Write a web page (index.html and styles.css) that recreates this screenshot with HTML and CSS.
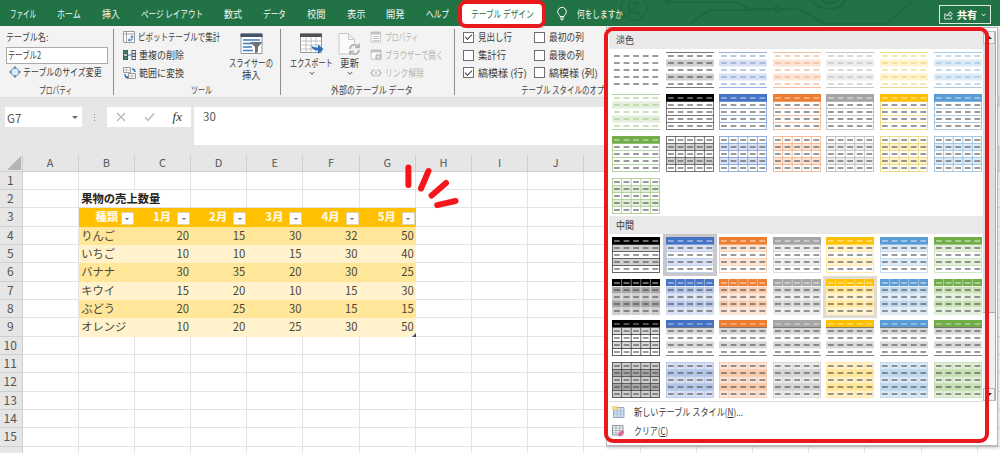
FILE: index.html
```html
<!DOCTYPE html>
<html lang="ja">
<head>
<meta charset="utf-8">
<title>果物の売上数量</title>
<link rel="stylesheet" href="styles.css">
</head>
<body>
<div class="app">
  <header class="tabbar">
    <svg class="circuit" width="400" height="26" viewBox="0 0 400 26" fill="none" stroke="#1d683e" stroke-width="1.6">
      <circle cx="34" cy="7" r="13"/><path d="M28 13 40 2M29 3v10h11M29 3h8"/>
      <circle cx="68" cy="2" r="2"/><path d="M70 2h65l16 7h26M90 24l19-14h60M180 9h18l28 15h60l28-24"/><circle cx="177" cy="9" r="2.5"/>
      <path d="M212 0c6 11 26 13 34 0M222 0c3 4 12 5 16 0"/>
    </svg>
    <nav class="tabs">
      <span data-w="26">ファイル</span><span data-w="24">ホーム</span><span data-w="18">挿入</span><span data-w="62">ページ レイアウト</span><span data-w="18">数式</span><span data-w="23">データ</span><span data-w="18.5">校閲</span><span data-w="18.5">表示</span><span data-w="18.5">開発</span><span data-w="23">ヘルプ</span>
    </nav>
    <div class="active-tab"><span data-w="63">テーブル デザイン</span></div>
    <div class="tell">
      <svg width="12" height="14" viewBox="0 0 12 14" fill="none" stroke="#fff"><path d="M4 9.5C4 8 1.700 7 1.700 4.700a4.200 4.200 0 0 1 8.600 0C10.300 7 8 8 8 9.500zM4 11h4M4.700 12.700h2.600"/></svg>
      <span data-w="46">何をしますか</span>
    </div>
    <div class="share">
      <svg width="9" height="10" viewBox="0 0 9 10" fill="none" stroke="#fff" stroke-width=".8"><path d="M2 4H.700v5h7V7M2.500 6C3 4 4 3.300 6 3.300V1.500l2.500 2.700L6 6.500V5C4.500 5 3.500 5.300 2.500 6z"/></svg>
      <b data-w="20">共有</b>
      <svg width="5" height="4" viewBox="0 0 5 4" fill="none" stroke="#fff"><path d="M.500.800 2.500 2.800 4.500.800"/></svg>
    </div>
  </header>

  <section class="ribbon">
    <div class="group g-prop">
      <div class="rows">
        <div class="row"><span data-w="42">テーブル名:</span></div>
        <div class="field"><span data-w="33">テーブル2</span></div>
        <div class="row resize">
          <svg width="12" height="12" viewBox="0 0 12 12"><rect x="2.500" y="2.500" width="7" height="7" rx="2" fill="#dce9f5" stroke="#8aa3bd"/><path d="M6 0 8 2.200H4zM6 12l2-2.200H4zM0 6l2.200-2v4zM12 6 9.800 4v4z" fill="#5c87b3"/></svg>
          <span data-w="78.500">テーブルのサイズ変更</span>
        </div>
      </div>
      <div class="caption"><span data-w="33">プロパティ</span></div>
    </div>

    <div class="group g-tool">
      <div class="body">
        <div class="rows">
          <div class="row"><svg width="12" height="12" viewBox="0 0 12 12"><path d="M.500.500h11v11H.500z" fill="#fff" stroke="#9a9a9a"/><path d="M.500 3h11M3.500.500v11" stroke="#a5a5a5"/><path d="M5.500 9h3.500V5M7.500 6.300 9 4.600l1.400 1.700M6.800 7.600 5.300 9l1.500 1.500" fill="none" stroke="#2e75b6"/></svg><span data-w="82">ピボットテーブルで集計</span></div>
          <div class="row"><svg width="13" height="12" viewBox="0 0 13 12"><path d="M0 1h5v10H0zM8.500 1H13v10H8.500z" fill="#4b5560"/><path d="M1 2h3v2H1z" fill="#3b8a5c"/><path d="M1 5h3v2H1zM9.300 5h3v2h-3z" fill="#b9c7d4"/><path d="M1 8h3v2H1z" fill="#3b8a5c"/><path d="M9.300 2h3v2h-3zM9.300 8h3v2h-3z" fill="#eee"/><path d="M5 6h3.500" stroke="#2e75b6"/></svg><span data-w="45">重複の削除</span></div>
          <div class="row"><svg width="13" height="12" viewBox="0 0 13 12"><path d="M.500.500h7v5h-7zM5.500 6.500h7v5h-7z" fill="#fff" stroke="#9a9a9a"/><path d="M1 3h6M3.500 1v4M6 9h6M9 7v4" stroke="#aaa" stroke-width=".7"/><path d="M9 2c2.500 0 3 1 3 3M2 7c0 3 1 4 3 4M3.500 9.300 5.500 11" fill="none" stroke="#2e75b6" stroke-width="1.400"/></svg><span data-w="45">範囲に変換</span></div>
        </div>
        <div class="big slicer">
          <svg width="23" height="22" viewBox="0 0 23 22"><path d="M1 1h21v19.500H1z" fill="#fff" stroke="#8f9aa5"/><path d="M.500.500h22V4H.500z" fill="#44546a"/><path d="M3 7h17M3 10.500h10M3 14h9M3 17.500h10" stroke="#3d7ebf" stroke-width="1.500"/><path d="M10 9h12.500l-4.500 5v5l-3 1.500V14z" fill="#6d7378"/></svg>
          <span data-w="44">スライサーの</span><span data-w="18.500">挿入</span>
        </div>
      </div>
      <div class="caption"><span data-w="21">ツール</span></div>
    </div>

    <div class="group g-ext">
      <div class="body">
        <div class="big export">
          <svg width="24" height="22" viewBox="0 0 24 22"><path d="M.500 1h21v18.500H.500z" fill="#fff" stroke="#999"/><path d="M0 .500h22V4H0z" fill="#505050"/><path d="M.500 8h21M.500 12h21M.500 16h21M6 4v15M11 4v15M16 4v15" stroke="#b5b5b5" stroke-width=".8"/><path d="M11 12.500c1 4 4 5 7 5v3.500l5.500-5-5.500-4.500v3c-3 0-5-.5-7-2z" fill="#2f6fb7"/></svg>
          <span data-w="43">エクスポート</span>
          <svg width="6" height="5" viewBox="0 0 6 5" class="chev"><path d="M.800 1 3 3.300 5.200 1"/></svg>
        </div>
        <div class="big refresh">
          <svg width="23" height="22" viewBox="0 0 23 22"><path d="M1 .500h9.500l6 6V21H1zM10.500.500v6h6" fill="#fafafa" stroke="#c8c8c8"/><circle cx="16.500" cy="16.500" r="6" fill="#f3f3f3"/><path d="M12 16c.5-5 6-5.500 8-2M21 17c-.5 5-6 5.500-8 2M21 10.500V14.500h-4M12 22.500v-4h4" fill="none" stroke="#b1b1b1" stroke-width="1.700"/></svg>
          <span data-w="19">更新</span>
          <svg width="6" height="5" viewBox="0 0 6 5" class="chev"><path d="M.800 1 3 3.300 5.200 1"/></svg>
        </div>
        <div class="rows off">
          <div class="row"><svg width="12" height="12" viewBox="0 0 12 12"><path d="M1 1h9.500v10H1z" fill="#fff" stroke="#c2c2c2"/><path d="M1 1h10v2.500H1z" fill="#c2c2c2"/><path d="M3 5.500h6M3 7.500h6M3 9.500h6" stroke="#c2c2c2"/></svg><span data-w="33">プロパティ</span></div>
          <div class="row"><svg width="12" height="12" viewBox="0 0 12 12"><path d="M1 1h10v9H1z" fill="#fff" stroke="#c2c2c2"/><path d="M1 1h10v2.500H1z" fill="#c2c2c2"/><circle cx="8.500" cy="8" r="3.300" fill="#bdbdbd"/><path d="M5.500 8h6M8.500 5v6" stroke="#eee" stroke-width=".7"/></svg><span data-w="58">ブラウザーで開く</span></div>
          <div class="row"><svg width="12" height="12" viewBox="0 0 12 12" fill="none" stroke="#bcbcbc" stroke-width="1.400"><path d="M4 2.500 1 6l3 3.500M8 2.500 11 6 8 9.500M5 6h2M6 3v1.500M6 7.500V9"/></svg><span data-w="39">リンク解除</span></div>
        </div>
      </div>
      <div class="caption"><span data-w="82">外部のテーブル データ</span></div>
    </div>

    <div class="group g-opt">
      <div class="body">
        <div class="rows checks">
          <div class="row"><i class="box on"></i><span data-w="34">見出し行</span></div>
          <div class="row"><i class="box"></i><span data-w="28">集計行</span></div>
          <div class="row"><i class="box on"></i><span data-w="49">縞模様 (行)</span></div>
        </div>
        <div class="rows checks">
          <div class="row"><i class="box"></i><span data-w="35">最初の列</span></div>
          <div class="row"><i class="box"></i><span data-w="35">最後の列</span></div>
          <div class="row"><i class="box"></i><span data-w="49">縞模様 (列)</span></div>
        </div>
      </div>
      <div class="caption"><span data-w="106">テーブル スタイルのオプション</span></div>
    </div>
  </section>

  <section class="formulabar">
    <div class="namebox"><span>G7</span><i class="tri"></i></div>
    <div class="grip"><i></i><i></i><i></i></div>
    <div class="fx">
      <svg width="10" height="10" viewBox="0 0 10 10"><path d="M1 1l8 8M9 1 1 9" stroke="#b9b9b9" stroke-width="1.300"/></svg>
      <svg width="11" height="10" viewBox="0 0 11 10"><path d="M1 5.500 4 8.500 10 1.500" fill="none" stroke="#b9b9b9" stroke-width="1.500"/></svg>
      <em>fx</em>
    </div>
    <div class="formula">30</div>
  </section>

  <main class="sheet" id="sheet"></main>

  <svg class="burst" width="60" height="50" viewBox="0 0 60 50" stroke="#f5161c" stroke-width="6" stroke-linecap="round"><path d="M8.400 7.500v17.500M28.500 11 21 28.500M46 23 31.600 35.500M55.500 41 37.200 45.200"/></svg>

  <aside class="panel">
    <div class="styles">
      <h2><span data-w="18">淡色</span></h2>
      <div class="gallery light" id="light"></div>
      <h2><span data-w="18">中間</span></h2>
      <div class="gallery medium" id="medium"></div>
      <div class="menu">
        <div class="item">
          <svg width="13" height="12" viewBox="0 0 13 12"><path d="M1.500 1.500h10.500v10H1.500z" fill="#d3e1ef" stroke="#9aa7b5"/><path d="M1.500 5h10.500M1.500 8h10.500M5 2v9.500M8.500 2v9.500" stroke="#9db6d0" stroke-width=".8"/><path d="M0 0h5v4H0z" fill="#f5d78c"/></svg>
          <span data-w="109">新しいテーブル スタイル(<u>N</u>)...</span>
        </div>
        <div class="item">
          <svg width="13" height="12" viewBox="0 0 13 12"><path d="M.500.500h10.500v9.500H.500z" fill="#f1f1f5" stroke="#8f939b"/><path d="M.500 3h10.500M.500 5.500h10.500M.500 8h10.500M4 .500v9.500M7.500.500v9.500" stroke="#a8acb5" stroke-width=".8"/><path d="M6 9 10 5l2.500 2-4 4.500H7z" fill="#e0679a"/></svg>
          <span data-w="34">クリア(<u>C</u>)</span>
        </div>
      </div>
    </div>
    <div class="scroll"><i class="btn up"></i><i class="thumb"></i><i class="track"></i><i class="btn down"></i></div>
  </aside>
  <div class="ring"></div>
</div>
<script src="app.js"></script>
</body>
</html>
```
FILE: styles.css
```css
* { box-sizing: border-box; }
body { margin: 0; font-family: "Noto Sans CJK JP", sans-serif; font-size: 10px; line-height: 12px; color: #3b3b3b; }
svg { display: block; flex: none; }
.app { position: relative; width: 1000px; height: 453px; overflow: hidden; background: #fff; display: flex; flex-direction: column; }
[data-w] { display: inline-block; flex: none; white-space: nowrap; text-align: left; }
.squeeze { display: inline-block; transform-origin: 0 50%; }

/* tab bar */
.tabbar { position: relative; flex: none; height: 26px; background: #217346; display: flex; align-items: center; color: #f2f8f4; }
.circuit { position: absolute; left: 600px; top: 0; }
.tabs { display: flex; gap: 21px; padding: 1px 0 0 10px; width: 458px; }
.active-tab { width: 88px; height: 28px; margin-top: 1px; border: 4px solid #e8191c; border-radius: 8px; background: #fff; color: #217346; display: flex; align-items: center; justify-content: center; z-index: 2; }
.tell { display: flex; align-items: center; gap: 9px; margin-left: 10px; padding-top: 1px; }
.share { position: relative; margin: 3px 9px 0 auto; width: 52px; height: 19px; border: 1px solid #dcebe2; display: flex; align-items: center; justify-content: center; gap: 4px; font-size: 10.5px; color: #fff; }

/* ribbon */
.ribbon { flex: none; height: 72px; background: #f3f3f3; display: flex; padding-top: 3px; border-bottom: 1px solid #dedede; }
.group { height: 66px; border-right: 1px solid #8e8e8e; display: flex; flex-direction: column; justify-content: space-between; flex: none; }
.g-prop { width: 114px; padding-left: 6px; }
.g-tool { width: 167px; padding-left: 9px; }
.g-ext { width: 174px; padding-left: 8px; }
.g-opt { width: 240px; padding-left: 8px; border: 0; }
.body { display: flex; }
.rows { display: flex; flex-direction: column; }
.row { height: 17.8px; display: flex; align-items: center; gap: 2.500px; padding-bottom: 1px; }
.field { height: 17px; width: 102px; border: 1px solid #ababab; background: #fff; padding: 1px 1px; }
.resize { padding-left: 3px; gap: 2px; }
.caption { text-align: center; height: 11px; line-height: 11px; color: #444; }
.g-prop .caption { padding-right: 8px; }
.g-opt .caption { padding-left: 58px; text-align: left; }
.big { display: flex; flex-direction: column; align-items: center; padding-top: 4px; }
.big > svg:first-child { margin-bottom: 2px; }
.slicer { margin-left: 8px; }
.export { width: 45px; }
.refresh { width: 31px; }
.chev { margin-top: 2px; fill: none; stroke: #555; }
.off { color: #b3b3b3; margin-left: 5px; }
.g-tool .rows { width: 98px; }
.checks { width: 71px; }
.checks .row { gap: 4px; }
.box { width: 11px; height: 11px; border: 1px solid #6e6e6e; background: #fff; display: flex; align-items: center; justify-content: center; }
.on::after { content: ""; width: 6px; height: 3px; margin-top: -2px; border: solid #444; border-width: 0 0 1px 1px; transform: rotate(-45deg); }

/* formula bar */
.formulabar { flex: none; height: 57px; background: #e6e6e6; padding: 9px 0 0 5px; display: flex; align-items: flex-start; font-size: 11.5px; color: #555; }
.namebox { width: 77px; height: 20px; background: #fff; display: flex; align-items: center; justify-content: space-between; padding: 1px 4px 0 2px; }
.tri { border: 3px solid transparent; border-top: 3px solid #666; border-bottom: 0; }
.grip { width: 25px; height: 20px; display: flex; flex-direction: column; align-items: center; justify-content: center; gap: 2px; }
.grip i { width: 1px; height: 1px; background: #888; }
.fx { width: 84px; height: 20px; background: #fff; display: flex; align-items: center; justify-content: space-between; padding: 0 9px; }
.fx em { font: italic 13px/18px "Liberation Serif", serif; color: #333; }
.formula { margin-left: 3px; flex: 1; height: 38px; background: #fff; padding: 3px 9px; }

/* worksheet */
.sheet { flex: none; width: 1034px; display: grid; grid-template-columns: 22.5px repeat(18, 56.2px); grid-template-rows: 16.600px repeat(16, 18.330px); font-size: 11.3px; line-height: 17px; color: #4a4738; }
.col, .num, .corner { background: #e6e6e6; color: #555; text-align: center; border: solid #cfcfcf; border-width: 0 1px 1px 0; }
.col { line-height: 14px; font-size: 11px; }
.num { font-size: 12px; padding-right: 1px; line-height: 16px; }
.corner { display: flex; justify-content: flex-end; align-items: flex-end; padding: 0 1px 1px 0; }
.corner::after { content: ""; border: solid transparent; border-width: 0 0 14px 14px; border-bottom-color: #b4b4b4; }
.cell { border: solid #e3e3e3; border-width: 0 1px 1px 0; white-space: nowrap; padding: 0 1px 0 2.500px; position: relative; }
.cell.title { font-weight: 700; color: #222; border-right-color: transparent; }
.head { background: #ffc000; border-color: #ffc000; color: #fff8df; font-weight: 700; display: flex; justify-content: flex-end; align-items: center; padding: 0 0 0 0; }
.head b { flex: 1; text-align: center; padding-left: 6px; margin-right: -6px; }
.head.first b { padding-left: 8px; }
.filter { width: 13px; height: 13px; margin-top: 4px; background: #fff; border: 1px solid #ddd3b0; display: flex; align-items: center; justify-content: center; }
.filter::after { content: ""; border: 2.500px solid transparent; border-top-color: #666; border-bottom: 0; }
.dark { background: #ffe699; border-color: #ffe699; }
.pale { background: #fff2cc; border-color: #fff2cc; }
.value { text-align: right; }
.end::after { content: ""; position: absolute; right: -1px; bottom: -1px; border: 2px solid #3c4a78; border-top-color: transparent; border-left-color: transparent; }
.burst { position: absolute; left: 400px; top: 160px; }

/* style gallery dropdown */
.panel { position: absolute; left: 606px; top: 27px; width: 392px; height: 419px; background: #fff; border: 1px solid #b8b8b8; display: flex; box-shadow: 1px 2px 3px #0003; }
.styles { width: 376px; padding: 3px 0 0 2px; }
.styles h2 { margin: 0; height: 18px; background: #e9e9e9; font-size: 10px; font-weight: 500; line-height: 18px; padding-left: 7px; color: #555; }
.gallery { display: grid; grid-template-columns: repeat(7, 53.6px); padding: 3px 0 0 3px; height: 170px; }
.light { height: 167px; grid-auto-rows: 42px; }
.medium { grid-template-rows: 42px 41px 42px 42px; }
.thumb-style { width: 48px; height: 36px; }
.selected { outline: 3px solid #c9c9c9; }
.hover { outline: 3px solid #e0dcd2; }
.menu { border-top: 1px solid #dcdcdc; margin-top: -3px; padding-top: 1px; display: flex; flex-direction: column; position: relative; }
.item { height: 18.500px; display: flex; align-items: center; gap: 9px; padding-left: 3px; }
.scroll { width: 13px; margin-top: 3px; height: 370px; background: #e9e9e9; display: flex; flex-direction: column; border-right: 1px solid #aaa; }
.btn { height: 13px; background: #f2f2f2; border: 1px solid #bbb; display: flex; align-items: center; justify-content: center; }
.btn::after { content: ""; border: 3px solid transparent; }
.up::after { border-bottom-color: #222; border-top: 0; }
.down::after { border-top-color: #222; border-bottom: 0; }
.thumb { height: 269px; background: #dedede; border-bottom: 1px solid #aaa; }
.track { flex: 1; background: #f0f0f0; }
.ring { position: absolute; left: 604px; top: 27px; width: 385px; height: 416px; border: 4px solid #e8191c; border-radius: 9px; }
```
FILE: app.js
```js
// Condense labels to the width of the UI font.
document.querySelectorAll('[data-w]').forEach(el => {
  const inner = document.createElement('span');
  inner.className = 'squeeze';
  inner.append(...el.childNodes);
  el.append(inner);
  const w = parseFloat(el.dataset.w), natural = inner.offsetWidth;
  el.style.width = w + 'px';
  inner.style.transform = `scaleX(${w / natural})`;
});

// Worksheet
const sheet = document.getElementById('sheet');
const add = (cls, text) => {
  const d = document.createElement('div');
  d.className = cls;
  d.textContent = text || '';
  sheet.append(d);
  return d;
};
const data = [
  ['りんご', 20, 15, 30, 32, 50], ['いちご', 10, 10, 15, 30, 40], ['バナナ', 30, 35, 20, 30, 25],
  ['キウイ', 15, 20, 10, 15, 30], ['ぶどう', 20, 25, 30, 15, 15], ['オレンジ', 10, 20, 25, 30, 50]
];
const heads = ['種類', '1月', '2月', '3月', '4月', '5月'];
add('corner');
for (let c = 0; c < 18; c++) add('col', c < 10 ? String.fromCharCode(65 + c) : '');
for (let r = 1; r <= 16; r++) {
  add('num', r < 16 ? String(r) : '');
  for (let c = 0; c < 18; c++) {
    const k = c - 1, inside = k >= 0 && k < 6;
    if (r === 2 && k === 0) add('cell title', '果物の売上数量');
    else if (r === 3 && inside) {
      const h = add('cell head' + (k ? '' : ' first'));
      h.innerHTML = `<b>${heads[k]}</b><i class="filter"></i>`;
    } else if (r > 3 && r < 10 && inside) {
      add('cell ' + (r % 2 ? 'pale' : 'dark') + (k ? ' value' : '') + (r === 9 && k === 5 ? ' end' : ''), String(data[r - 4][k]));
    } else add('cell');
  }
}

// Table style thumbnails
const palette = {
  black: ['#000', '#d0d0d0', '#a6a6a6', '#555'], blue: ['#4472c4', '#d9e1f2', '#b4c6e7', '#7f9dd6'],
  orange: ['#ed7d31', '#fce4d6', '#f8cbad', '#efae85'], gray: ['#a5a5a5', '#ededed', '#d4d4d4', '#bababa'],
  yellow: ['#ffc000', '#fff2cc', '#ffe699', '#e8d572'], sky: ['#5b9bd5', '#ddebf7', '#bdd7ee', '#93bede'],
  green: ['#70ad47', '#e2efda', '#c6e0b4', '#a3cb8a']
};
function thumb(kind, name, extra) {
  const [main, pale, mid, line] = palette[name];
  const tops = [0, 7.5, 14.5, 21.5, 28.5, 36], W = 48;
  let s = '';
  const rect = (i, f) => s += `<rect y="${tops[i]}" width="${W}" height="${tops[i + 1] - tops[i]}" fill="${f}"/>`;
  const lines = (color, rows, cols) => {
    if (rows) tops.slice(1, 5).forEach(y => s += `<path d="M0 ${y}h${W}" stroke="${color}" stroke-width=".8"/>`);
    if (cols) [1, 2, 3, 4].forEach(i => s += `<path d="M${i * 9.6} 0v36" stroke="${color}" stroke-width=".8"/>`);
  };
  const frame = color => s += `<rect x=".5" y=".5" width="47" height="35" fill="none" stroke="${color}" stroke-width=".8"/>`;
  const edge = name === 'black' ? '#444' : mid;
  let dash = '#4a4a4a', headDash = '#4a4a4a';
  if (kind === 'banded') {
    rect(1, pale); rect(3, pale);
    s += `<path d="M0 .5h48M0 35.5h48" stroke="${line}" stroke-width=".8"/>`;
    dash = headDash = name === 'black' ? '#444' : line;
  } else if (kind === 'ruled') {
    lines(line, 1, 0); frame(line); rect(0, main); headDash = '#ffffffb0';
  } else if (kind === 'grid') {
    rect(1, pale); rect(3, pale); lines(line, 1, 1); frame(line);
  } else if (kind === 'soft') {
    rect(1, pale); rect(3, pale); lines(edge, 1, 0); frame(edge);
    rect(0, main); headDash = '#ffffffc0';
  } else if (kind === 'solid') {
    rect(0, main); rect(1, mid); rect(2, pale); rect(3, mid); rect(4, pale); lines('#ffffff90', 0, 1);
    s += '<path d="M0 7.5h48" stroke="#fff" stroke-width=".7"/>'; headDash = '#ffffffc0';
  } else if (kind === 'report') {
    rect(1, '#d9d9d9'); rect(3, '#d9d9d9');
    if (name === 'black') { lines('#333', 1, 1); frame('#333'); }
    rect(0, main);
    s += '<path d="M0 7.5h48M0 35.5h48" stroke="#666" stroke-width=".8"/>'; headDash = '#ffffff90';
  } else if (kind === 'filled') {
    [pale, mid, pale, mid, pale].forEach((f, i) => rect(i, f));
    lines(edge, 1, 1); frame(edge);
  }
  for (let i = 0; i < 5; i++) {
    for (let j = 0; j < 5; j++) s += `<path d="M${j * 9.6 + 2} ${4 + i * 7}h5.800" stroke="${i ? dash : headDash}" stroke-width="1.100"/>`;
  }
  return `<svg class="thumb-style ${extra || ''}" viewBox="0 0 48 36">${s}</svg>`;
}
const order = ['black', 'blue', 'orange', 'gray', 'yellow', 'sky', 'green'];
let light = thumb('plain', 'black');
['banded', 'ruled', 'grid'].forEach(k => order.forEach(n => light += thumb(k, n)));
document.getElementById('light').innerHTML = light;
let medium = '';
['soft', 'solid', 'report', 'filled'].forEach(k => order.forEach(n => {
  const extra = k === 'soft' && n === 'blue' ? 'selected' : k === 'solid' && n === 'yellow' ? 'hover' : '';
  medium += thumb(k, n, extra);
}));
document.getElementById('medium').innerHTML = medium;
```
